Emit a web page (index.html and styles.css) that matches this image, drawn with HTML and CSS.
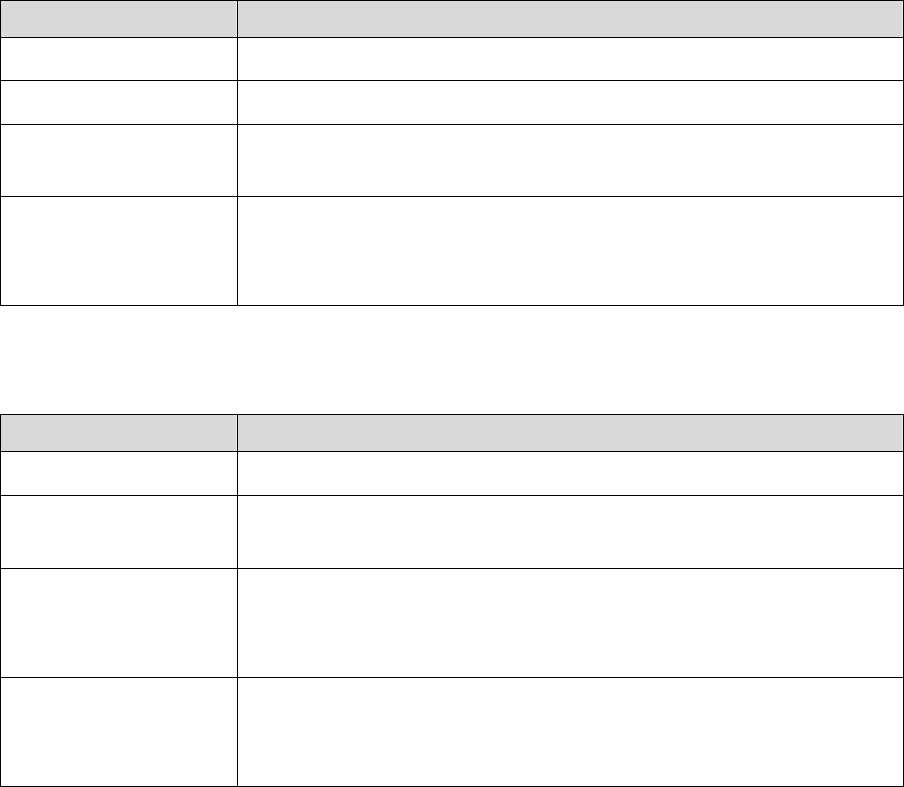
FILE: index.html
```html
<!DOCTYPE html>
<html>
<head>
<meta charset="utf-8">
<link rel="stylesheet" href="styles.css">
</head>
<body>
<div class="tbl tbl-first">
  <div class="cell head h37"></div><div class="cell head h37"></div>
  <div class="cell h43"></div><div class="cell h43"></div>
  <div class="cell h44"></div><div class="cell h44"></div>
  <div class="cell h72"></div><div class="cell h72"></div>
  <div class="cell h109"></div><div class="cell h109"></div>
</div>
<div class="tbl tbl-second">
  <div class="cell head h37"></div><div class="cell head h37"></div>
  <div class="cell h44"></div><div class="cell h44"></div>
  <div class="cell h73"></div><div class="cell h73"></div>
  <div class="cell h109"></div><div class="cell h109"></div>
  <div class="cell h109"></div><div class="cell h109"></div>
</div>
</body>
</html>
```
FILE: styles.css
```css
html, body {
  margin: 0;
  padding: 0;
  background: #ffffff;
  font-family: "Liberation Sans", Arial, sans-serif;
}
.tbl {
  display: grid;
  grid-template-columns: 237px 666px;
  width: 904px;
  border-top: 1px solid #000;
  border-left: 1px solid #000;
  box-sizing: border-box;
}
.tbl-second {
  margin-top: 108px;
}
.cell {
  box-sizing: border-box;
  border-right: 1px solid #000;
  border-bottom: 1px solid #000;
}
.head {
  background: #d9d9d9;
  box-shadow: inset -1px 0 0 #ececec;
}
.h37 { height: 37px; }
.h43 { height: 43px; }
.h44 { height: 44px; }
.h72 { height: 72px; }
.h73 { height: 73px; }
.h109 { height: 109px; }
```
